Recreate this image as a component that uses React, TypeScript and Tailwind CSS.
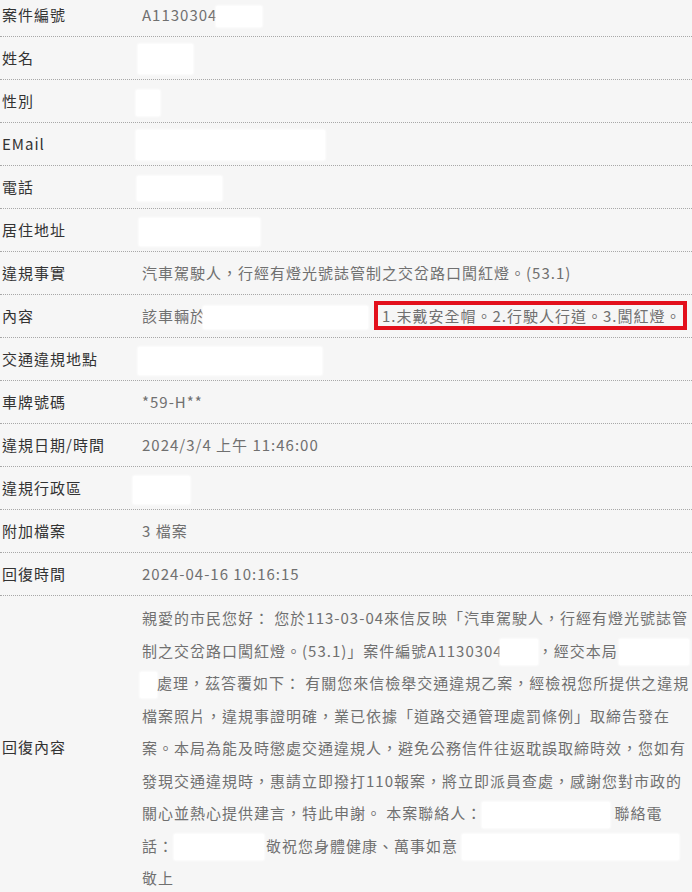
function Mask({ w, h = 26, className = '' }: { w: number; h?: number; className?: string }) {
  return (
    <span
      className={`inline-block bg-white rounded-[2px] align-middle shadow-[0_0_2px_1px_rgba(255,255,255,0.8)] ${className}`}
      style={{ width: w, height: h }}
    />
  );
}

function Row({ label, children, tall = false }: { label: string; children: React.ReactNode; tall?: boolean }) {
  return (
    <div className={`flex items-center border-b border-dotted border-[#a8a8a8] ${tall ? '' : 'h-[43px]'}`}>
      <div className="w-[142px] shrink-0 pl-[2px] text-[#333]">{label}</div>
      <div className={`flex-1 text-[#707070] whitespace-nowrap ${tall ? 'pt-[6px] pb-[4px] leading-[32.5px]' : 'leading-[32px]'}`}>
        {children}
      </div>
    </div>
  );
}

export default function App() {
  return (
    <div
      className="min-h-[892px] bg-[#f6f6f6] text-[15px] tracking-[1px] overflow-hidden"
      style={{ fontFamily: '"Noto Sans CJK TC", "Liberation Sans", sans-serif' }}
    >
      <div className="-mt-[6px]">
        <Row label="案件編號">
          A1130304<Mask w={46} h={21} className="-ml-[1px]" />
        </Row>
        <Row label="姓名">
          <Mask w={55} h={30} className="-ml-[4px]" />
        </Row>
        <Row label="性別">
          <Mask w={24} h={26} className="-ml-[6px]" />
        </Row>
        <Row label="EMail">
          <Mask w={189} h={30} className="-ml-[6px]" />
        </Row>
        <Row label="電話">
          <Mask w={85} h={25} className="-ml-[5px]" />
        </Row>
        <Row label="居住地址">
          <Mask w={121} h={28} className="-ml-[3px]" />
        </Row>
        <Row label="違規事實">汽車駕駛人，行經有燈光號誌管制之交岔路口闖紅燈。(53.1)</Row>
        <Row label="內容">
          該車輛於<Mask w={165} h={23} className="-ml-[3px]" />
          <span className="relative ml-[14px]">
            1.末戴安全帽。2.行駛人行道。3.闖紅燈。
            <span className="absolute -left-[8px] -right-[5px] -top-[4px] -bottom-[4px] border-[4px] border-[#e3101c]" />
          </span>
        </Row>
        <Row label="交通違規地點">
          <Mask w={184} h={28} className="-ml-[4px]" />
        </Row>
        <Row label="車牌號碼">*59-H**</Row>
        <Row label="違規日期/時間">2024/3/4 上午 11:46:00</Row>
        <Row label="違規行政區">
          <Mask w={57} h={28} className="-ml-[9px]" />
        </Row>
        <Row label="附加檔案">3 檔案</Row>
        <Row label="回復時間">2024-04-16 10:16:15</Row>
        <Row label="回復內容" tall>
          <div>親愛的市民您好： 您於113-03-04來信反映「汽車駕駛人，行經有燈光號誌管</div>
          <div>
            制之交岔路口闖紅燈。(53.1)」案件編號A1130304<Mask w={38} className="-ml-[3px]" />，經交本局<Mask w={70} className="ml-[1px]" />
          </div>
          <div>
            <Mask w={17} className="-ml-[2px]" />處理，茲答覆如下： 有關您來信檢舉交通違規乙案，經檢視您所提供之違規
          </div>
          <div>檔案照片，違規事證明確，業已依據「道路交通管理處罰條例」取締告發在</div>
          <div>案。本局為能及時懲處交通違規人，避免公務信件往返耽誤取締時效，您如有</div>
          <div>發現交通違規時，惠請立即撥打110報案，將立即派員查處，感謝您對市政的</div>
          <div>
            關心並熱心提供建言，特此申謝。 本案聯絡人：<Mask w={128} className="mr-[4px]" />聯絡電
          </div>
          <div>
            話：<Mask w={90} className="mr-[2px]" />敬祝您身體健康、萬事如意<Mask w={217} className="ml-[4px]" />
          </div>
          <div>敬上</div>
        </Row>
      </div>
    </div>
  );
}
